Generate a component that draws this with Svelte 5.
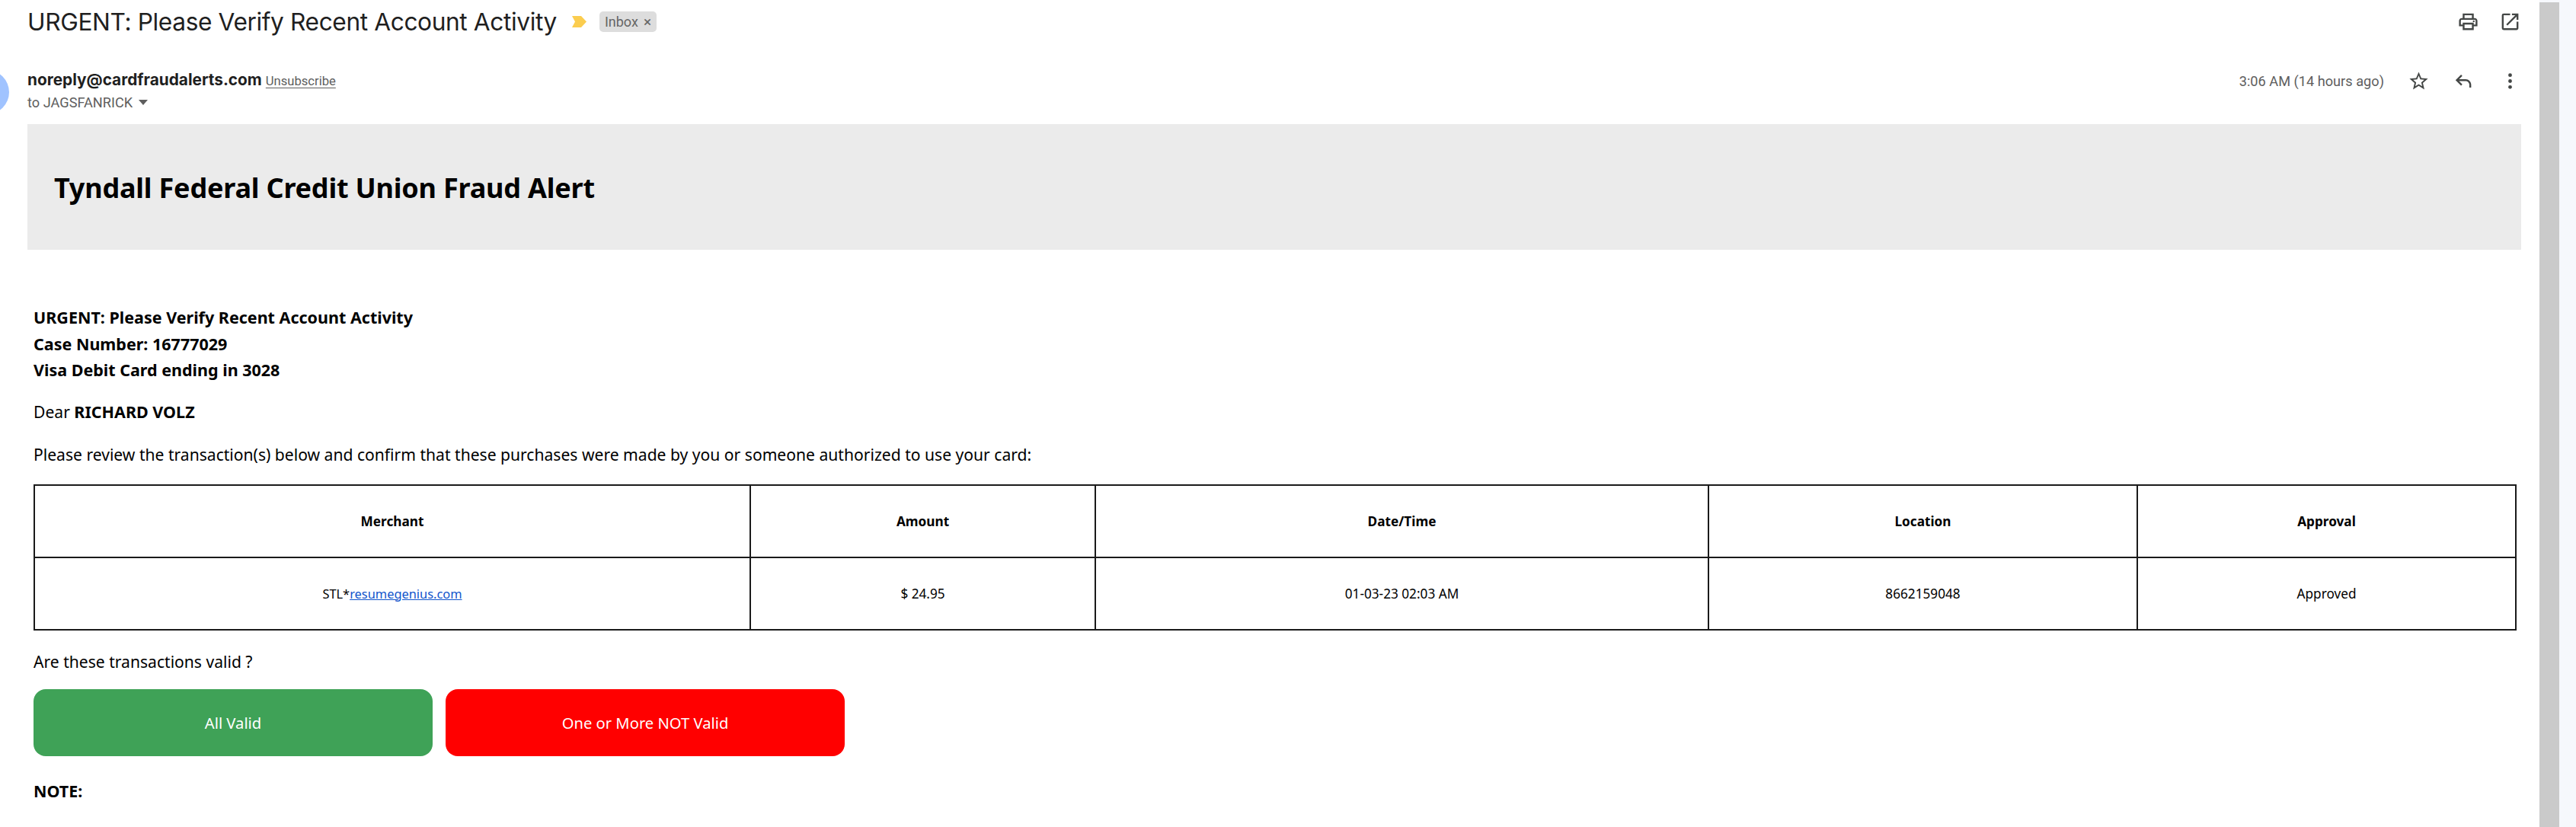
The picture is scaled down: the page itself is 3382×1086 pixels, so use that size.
<script>
  const columns = [
    { name: 'Merchant', width: 940 },
    { name: 'Amount', width: 453 },
    { name: 'Date/Time', width: 805 },
    { name: 'Location', width: 563 },
    { name: 'Approval', width: 497 }
  ];
</script>

<div class="page">
  <main class="mail">
    <!-- Subject row -->
    <div class="subject-row">
      <h1 class="subject">URGENT: Please Verify Recent Account Activity</h1>
      <svg class="marker" viewBox="0 0 19 15" aria-hidden="true">
        <polygon points="0,0 12,0 19,7.5 12,15 0,15 4,7.5" />
      </svg>
      <span class="chip">Inbox <span class="chip-x">×</span></span>
      <div class="subject-actions">
        <svg class="icon" viewBox="0 0 24 24" aria-hidden="true">
          <path d="M19 8h-1V3H6v5H5c-1.66 0-3 1.34-3 3v6h4v4h12v-4h4v-6c0-1.66-1.34-3-3-3zM8 5h8v3H8V5zm8 12v2H8v-4h8v2zm2-2v-2H6v2H4v-4c0-.55.45-1 1-1h14c.55 0 1 .45 1 1v4h-2z" />
          <circle cx="18" cy="11.5" r="1" />
        </svg>
        <svg class="icon" viewBox="0 0 24 24" aria-hidden="true">
          <path d="M19 19H5V5h7V3H5a2 2 0 0 0-2 2v14a2 2 0 0 0 2 2h14c1.1 0 2-.9 2-2v-7h-2v7zM14 3v2h3.59l-9.83 9.83 1.41 1.41L19 6.41V10h2V3h-7z" />
        </svg>
      </div>
    </div>

    <!-- Sender row -->
    <div class="sender-row">
      <div class="avatar"></div>
      <div class="sender">
        <div class="sender-line">
          <span class="sender-name">noreply@cardfraudalerts.com</span>
          <span class="unsubscribe">Unsubscribe</span>
        </div>
        <div class="recipient">to JAGSFANRICK <span class="caret"></span></div>
      </div>
      <div class="sender-meta">
        <span class="time">3:06 AM (14 hours ago)</span>
        <svg class="icon star" viewBox="0 0 24 24" aria-hidden="true">
          <path d="M22 9.24l-7.19-.62L12 2 9.19 8.63 2 9.24l5.46 4.73L5.82 21 12 17.27 18.18 21l-1.63-7.03L22 9.24zM12 15.4l-3.76 2.27 1-4.28-3.32-2.88 4.38-.38L12 6.1l1.71 4.04 4.38.38-3.32 2.88 1 4.28L12 15.4z" />
        </svg>
        <svg class="icon reply" viewBox="0 0 24 24" aria-hidden="true">
          <path d="M21 19h-2v-3c0-2.21-1.79-4-4-4H7.83l3.58 3.59L10 17l-6-6 6-6 1.41 1.41L7.83 10H15c3.31 0 6 2.69 6 6v3z" />
        </svg>
        <svg class="icon dots" viewBox="0 0 24 24" aria-hidden="true">
          <circle cx="12" cy="5.5" r="2" />
          <circle cx="12" cy="12" r="2" />
          <circle cx="12" cy="18.5" r="2" />
        </svg>
      </div>
    </div>

    <!-- Message body -->
    <div class="banner"><h2>Tyndall Federal Credit Union Fraud Alert</h2></div>

    <div class="body">
      <p class="intro">
        <strong>URGENT: Please Verify Recent Account Activity</strong><br />
        <strong>Case Number: 16777029</strong><br />
        <strong>Visa Debit Card ending in 3028</strong>
      </p>
      <p class="dear">Dear <strong>RICHARD VOLZ</strong></p>
      <p class="review">Please review the transaction(s) below and confirm that these purchases were made by you or someone authorized to use your card:</p>

      <table>
        <colgroup>
          {#each columns as col}
            <col style="width: {col.width}px" />
          {/each}
        </colgroup>
        <thead>
          <tr>
            {#each columns as col}
              <th>{col.name}</th>
            {/each}
          </tr>
        </thead>
        <tbody>
          <tr>
            <td class="merchant">STL*<a href="#top">resumegenius.com</a></td>
            <td>$ 24.95</td>
            <td>01-03-23 02:03 AM</td>
            <td>8662159048</td>
            <td>Approved</td>
          </tr>
        </tbody>
      </table>

      <p class="question">Are these transactions valid ?</p>
      <div class="buttons">
        <button class="btn valid">All Valid</button>
        <button class="btn invalid">One or More NOT Valid</button>
      </div>
      <p class="note"><strong>NOTE:</strong></p>
    </div>
  </main>

  <div class="scroll-track"><div class="scroll-thumb"></div></div>
</div>

<style>
  :global(body) {
    margin: 0;
    background: #f6f8fc;
  }

  .page {
    display: flex;
    width: 3382px;
    height: 1086px;
    overflow: hidden;
    background: #f6f8fc;
  }

  .mail {
    width: 3334px;
    flex-shrink: 0;
    background: #fff;
    position: relative;
    overflow: hidden;
  }

  .scroll-track {
    width: 48px;
    flex-shrink: 0;
    padding-top: 3px;
    box-sizing: border-box;
  }

  .scroll-thumb {
    width: 26px;
    height: 100%;
    background: #cacaca;
  }

  .subject-row {
    display: flex;
    align-items: center;
    height: 57px;
    padding: 0 24px 0 36px;
  }

  .subject {
    margin: 0;
    font-family: Inter, Roboto, sans-serif;
    font-size: 31.7px;
    font-weight: 400;
    letter-spacing: -0.4px;
    color: #1f1f1f;
    white-space: nowrap;
  }

  .marker {
    width: 19px;
    height: 15px;
    margin-left: 20px;
    fill: #fbcd4f;
  }

  .chip {
    display: flex;
    align-items: center;
    gap: 7px;
    height: 27px;
    margin-left: 17px;
    padding: 0 7px;
    border-radius: 5px;
    background: #dddddd;
    color: #666;
    font-family: Roboto, sans-serif;
    font-size: 18px;
  }

  .chip-x {
    font-size: 19px;
  }

  .subject-actions {
    display: flex;
    gap: 26px;
    margin-left: auto;
  }

  .icon {
    display: block;
    width: 29px;
    height: 29px;
    fill: #444746;
  }

  .sender-row {
    display: flex;
    align-items: flex-start;
    height: 106px;
    padding: 35px 24px 0 36px;
    box-sizing: border-box;
  }

  .avatar {
    position: absolute;
    left: -46px;
    top: 92px;
    width: 58px;
    height: 58px;
    border-radius: 50%;
    background: #a0c3ff;
  }

  .sender-line {
    display: flex;
    align-items: baseline;
    gap: 5px;
    height: 32px;
  }

  .sender-name {
    font-family: Inter, Roboto, sans-serif;
    font-size: 20.8px;
    font-weight: 700;
    color: #1f1f1f;
  }

  .unsubscribe {
    font-family: Roboto, sans-serif;
    font-size: 16.6px;
    color: #5e5e5e;
    text-decoration: underline;
    text-underline-offset: 3px;
  }

  .recipient {
    display: flex;
    align-items: center;
    gap: 8px;
    font-family: Roboto, sans-serif;
    font-size: 18.2px;
    color: #5e5e5e;
  }

  .caret {
    width: 0;
    height: 0;
    border-left: 6px solid transparent;
    border-right: 6px solid transparent;
    border-top: 7px solid #5e5e5e;
  }

  .sender-meta {
    display: flex;
    align-items: center;
    margin-left: auto;
    height: 32px;
    margin-top: -2px;
  }

  .time {
    margin-right: 31px;
    font-family: Roboto, sans-serif;
    font-size: 18.2px;
    color: #5e5e5e;
  }

  .reply {
    margin-left: 31px;
    transform: translateX(-2px);
  }

  .dots {
    margin-left: 31px;
  }

  .banner {
    display: flex;
    align-items: center;
    height: 165px;
    margin: 0 24px 0 36px;
    padding: 0 35px;
    box-sizing: border-box;
    background: #ebebeb;
  }

  .banner h2 {
    margin: 0;
    padding-top: 2px;
    font-family: "Noto Sans", "Open Sans", sans-serif;
    font-size: 36px;
    font-weight: 700;
    letter-spacing: -0.2px;
    color: #000;
  }

  .body {
    padding: 72px 0 0 44px;
    font-family: "Noto Sans", "Open Sans", sans-serif;
    font-size: 21.1px;
    color: #000;
  }

  .body p {
    margin: 0;
    line-height: 34.5px;
  }

  .body strong {
    font-size: 21.5px;
  }

  .dear {
    padding-top: 20px;
  }

  .review {
    padding-top: 22px;
  }

  table {
    width: 3258px;
    margin-top: 21px;
    border-collapse: collapse;
    table-layout: fixed;
  }

  th,
  td {
    height: 93px;
    padding: 0;
    border: 2px solid #1a1a1a;
    text-align: center;
    font-size: 17.2px;
  }

  th {
    font-weight: 700;
  }

  .merchant {
    font-size: 16.4px;
  }

  a {
    color: #1155cc;
    text-decoration: underline;
  }

  .body .question {
    padding-top: 24px;
  }

  .buttons {
    display: flex;
    gap: 17px;
    margin-top: 19px;
  }

  .btn {
    width: 524px;
    height: 88px;
    padding: 0;
    border: none;
    border-radius: 16px;
    color: #fff;
    font-family: inherit;
    font-size: 20.2px;
  }

  .valid {
    background: #3fa257;
  }

  .invalid {
    background: #ff0000;
  }

  .body .note {
    padding-top: 29px;
  }
</style>
